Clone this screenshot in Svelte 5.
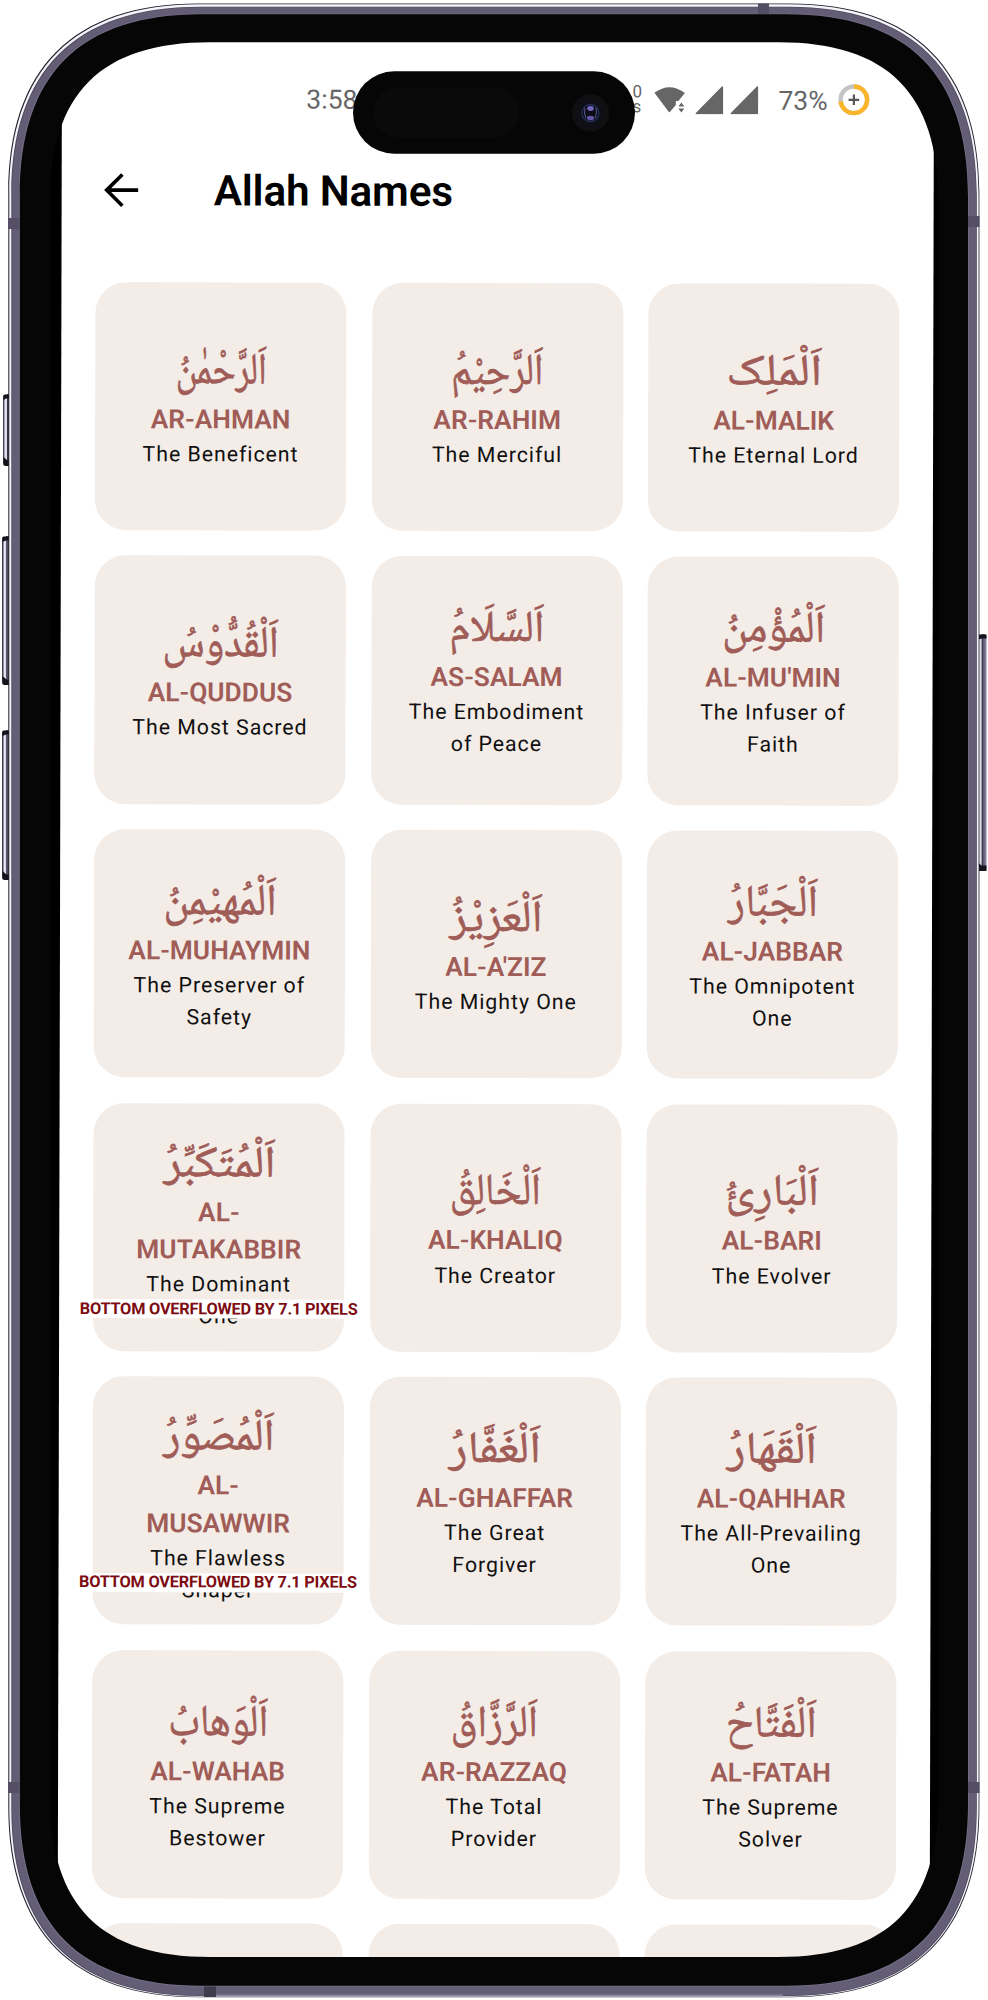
<script>
  const names = [
    { ar: 'اَلرَّحْمٰنُ', w: 91, name: 'AR-AHMAN', desc: 'The Beneficent' },
    { ar: 'اَلرَّحِيْمُ', w: 92, name: 'AR-RAHIM', desc: 'The Merciful' },
    { ar: 'اَلْمَلِک', w: 96, name: 'AL-MALIK', desc: 'The Eternal Lord' },
    { ar: 'اَلْقُدُّوْسُ', w: 116, name: 'AL-QUDDUS', desc: 'The Most Sacred' },
    { ar: 'اَلسَّلَامُ', w: 95, name: 'AS-SALAM', desc: 'The Embodiment\nof Peace' },
    { ar: 'اَلْمُؤْمِنُ', w: 103, name: "AL-MU'MIN", desc: 'The Infuser of\nFaith' },
    { ar: 'اَلْمُهيْمِنُ', w: 113, name: 'AL-MUHAYMIN', desc: 'The Preserver of\nSafety' },
    { ar: 'اَلْعَزِيْزُ', w: 93, name: "AL-A'ZIZ", desc: 'The Mighty One' },
    { ar: 'اَلْجَبَّارُ', w: 90, name: 'AL-JABBAR', desc: 'The Omnipotent\nOne' },
    { ar: 'اَلْمُتَكَبِّرُ', w: 112, name: 'AL-\nMUTAKABBIR', desc: 'The Dominant\nOne', over: true },
    { ar: 'اَلْخَالِقُ', w: 91, name: 'AL-KHALIQ', desc: 'The Creator' },
    { ar: 'اَلْبَارِئُ', w: 93, name: 'AL-BARI', desc: 'The Evolver' },
    { ar: 'اَلْمُصَوِّرُ', w: 111, name: 'AL-\nMUSAWWIR', desc: 'The Flawless\nShaper', over: true },
    { ar: 'اَلْغَفَّارُ', w: 92, name: 'AL-GHAFFAR', desc: 'The Great\nForgiver' },
    { ar: 'اَلْقَهَارُ', w: 90, name: 'AL-QAHHAR', desc: 'The All-Prevailing\nOne' },
    { ar: 'اَلْوَهابُ', w: 100, name: 'AL-WAHAB', desc: 'The Supreme\nBestower' },
    { ar: 'اَلرَّزَّاقُ', w: 87, name: 'AR-RAZZAQ', desc: 'The Total\nProvider' },
    { ar: 'اَلْفَتَّاحُ', w: 91, name: 'AL-FATAH', desc: 'The Supreme\nSolver' },
    null,
    null,
    null
  ];

  // Rounded box with continuous corners: r is the corner reach, k the control offset.
  function box(x1, y1, x2, y2, r, k) {
    return `M${x1} ${y1 + r}C${x1} ${y1 + k} ${x1 + k} ${y1} ${x1 + r} ${y1}H${x2 - r}C${x2 - k} ${y1} ${x2} ${y1 + k} ${x2} ${y1 + r}V${y2 - r}C${x2} ${y2 - k} ${x2 - k} ${y2} ${x2 - r} ${y2}H${x1 + r}C${x1 + k} ${y2} ${x1} ${y2 - k} ${x1} ${y2 - r}Z`;
  }
  const hole = box(50, 42.3, 938.5, 1957, 160, 51);
  const rim = box(27, 21, 961, 1979, 178, 58);
  const outer = box(8.3, 3.5, 979.4, 1997.3, 190, 65);
  const light = box(9.3, 4.3, 978.6, 1996.8, 190, 65);
  const metal = box(11.3, 6.8, 976.8, 1996, 188, 64);
  const glass = box(19.8, 14.3, 968, 1985.8, 182, 60);
  const buttons = [
    { x: 3, y: 394, w: 8, h: 72 },
    { x: 2, y: 536, w: 9, h: 149 },
    { x: 2, y: 730, w: 9, h: 150 },
    { x: 977, y: 634, w: 9.5, h: 237 }
  ];
</script>

<main class="phone">
  <div class="screen">
    <div class="status">
      <span class="time">3:58</span>
      <div class="right">
        <span class="net"><i>0</i><i>s</i></span>
        <svg class="wifi" width="32" height="27" viewBox="0 0 32 27">
          <path d="M0.500 6.500Q15.500 -5 31 6.500L24.500 14.500H22V18.500L16 25.500Q15.500 26 15 25.500Z" fill="#666" />
          <path d="M24.500 20L27.500 16L30.500 20ZM24.500 22L27.500 26L30.500 22Z" fill="#666" />
        </svg>
        <svg class="sig" width="29" height="29" viewBox="0 0 29 29"><path d="M1.500 28H27.500V1.500Z" fill="#666" stroke="#666" stroke-width="1.500" stroke-linejoin="round" /></svg>
        <svg class="sig two" width="29" height="29" viewBox="0 0 29 29"><path d="M1.500 28H27.500V1.500Z" fill="#666" stroke="#666" stroke-width="1.500" stroke-linejoin="round" /></svg>
        <span class="pct">73%</span>
        <svg width="32" height="32" viewBox="0 0 32 32">
          <circle cx="16" cy="16" r="13.300" fill="none" stroke="#c4c4c4" stroke-width="4.400" />
          <path d="M16 2.700A13.300 13.300 0 1 1 2.800 17.600" fill="none" stroke="#fbb52d" stroke-width="4.400" />
          <path d="M16 10.700V21.300M10.700 16H21.300" stroke="#555" stroke-width="2.200" />
        </svg>
      </div>
    </div>

    <header>
      <svg width="36" height="36" viewBox="0 0 36 36" fill="none" stroke="#000" stroke-width="3.600">
        <path d="M18.700 2.300L3 18L18.700 33.700M3 18H34.500" />
      </svg>
      <h1>Allah Names</h1>
    </header>

    <div class="grid">
      {#each names as n}
        <article class:tall={n?.over}>
          {#if n}
            <svg class="arabic" width="140" height="57" viewBox="0 0 140 57">
              <text x="70" y="39" text-anchor="middle" textLength={n.w} lengthAdjust="spacingAndGlyphs" lang="ar">{n.ar}</text>
            </svg>
            <h2>{n.name}</h2>
            <p>{n.desc}</p>
            {#if n.over}<div class="over"><span>BOTTOM OVERFLOWED BY 7.1 PIXELS</span></div>{/if}
          {/if}
        </article>
      {/each}
    </div>
  </div>

  <svg class="frame" width="988" height="2000" viewBox="0 0 988 2000">
    <defs>
      <linearGradient id="btn">
        <stop offset="0" stop-color="#1a1923" />
        <stop offset=".14" stop-color="#77738a" />
        <stop offset=".25" stop-color="#e9e8f4" />
        <stop offset=".45" stop-color="#d8d7e8" />
        <stop offset=".52" stop-color="#25232f" />
        <stop offset=".62" stop-color="#55506a" />
        <stop offset="1" stop-color="#8d89a2" />
      </linearGradient>
      <radialGradient id="cam">
        <stop offset="0" stop-color="#17172b" />
        <stop offset=".45" stop-color="#0e0f18" />
        <stop offset="1" stop-color="#101011" />
      </radialGradient>
    </defs>
    {#each buttons as b}
      <rect x={b.x} y={b.y} width={b.w} height={b.h} rx="3" fill="url(#btn)" />
      <path d="M{b.x + 0.5} {b.y + 6}V{b.y + 2}q0 -1.500 2 -1.500H{b.x + b.w}v4h-5zM{b.x + 0.5} {b.y + b.h - 9}l4 3.500h{b.w - 4.5}v5.500H{b.x + 2.5}q-2 0 -2 -3z" fill="#15141c" />
    {/each}
    <g fill-rule="evenodd">
      <path d={outer + rim} fill="#24222e" />
      <path d={light + rim} fill="#f4f3f9" />
      <path d={metal + rim} fill="#4c475c" />
      <path d={box(12.1, 7.3, 976.2, 1995.5, 188, 64) + rim} fill="#635d75" />
      <path d={box(19, 13.8, 968.7, 1986.5, 182, 60) + rim} fill="#77728b" />
      <path d={glass + hole} fill="#060606" />
    </g>
    <path d="M205 1995.500H783" stroke="#8985a0" stroke-width="2.200" />
    <g fill="#544f65">
      <rect x="8" y="218" width="11.500" height="11" />
      <rect x="8" y="1782" width="11.500" height="11" />
      <rect x="968" y="216" width="11.500" height="11" />
      <rect x="968" y="1782" width="11.500" height="11" />
      <rect x="758" y="3.500" width="11" height="10.500" />
      <rect x="204" y="1986.500" width="12" height="10.500" fill="#403c4e" />
    </g>
    <rect x="353" y="71.300" width="282" height="82.400" rx="41.200" fill="#060606" />
    <rect x="373" y="87.500" width="146" height="50" rx="25" fill="#0a0a0a" />
    <circle cx="590.500" cy="113" r="18.500" fill="url(#cam)" />
    <circle cx="590.500" cy="113" r="8.500" fill="#0b0b16" stroke="#263056" stroke-width="1.300" />
    <ellipse cx="590.500" cy="108.500" rx="3.300" ry="2.400" fill="#7466bd" />
    <ellipse cx="590.500" cy="118" rx="3.600" ry="2.200" fill="#6257a5" />
    <path d="M585 108Q583.500 113 586 118M596 108Q597.500 113 595 118" fill="none" stroke="#5d5e91" stroke-width="1" />
  </svg>
</main>

<style>
  :global(body) {
    margin: 0;
    background: #fff;
  }
  .phone {
    position: relative;
    box-sizing: border-box;
    width: 988px;
    height: 2000px;
    padding: 42px 54.700px 43px 61.500px;
    overflow: hidden;
    font-family: Roboto, sans-serif;
    background: linear-gradient(#000, #000) 45px 115px / 898px 1770px no-repeat;
  }
  .screen {
    height: 1918px;
    overflow: hidden;
    background: #fff;
    transform: rotate(0.130deg);
    transform-origin: 0 0;
  }
  .frame {
    position: absolute;
    inset: 0;
  }
  .status {
    display: flex;
    justify-content: space-between;
    align-items: center;
    height: 32px;
    padding: 40px 64px 0 244.500px;
    font-size: 26.500px;
    color: #666;
  }
  .right {
    display: flex;
    align-items: center;
  }
  .net {
    display: flex;
    flex-direction: column;
    width: 10px;
    margin-right: 11px;
    font-size: 17px;
    line-height: 15px;
  }
  .net i {
    font-style: normal;
  }
  .sig {
    margin-left: 9px;
  }
  .sig.two {
    margin-left: 6px;
  }
  .pct {
    margin: 1px 10px 0 20px;
  }
  header {
    display: flex;
    align-items: center;
    height: 60px;
    padding: 46px 0 0 42px;
  }
  h1 {
    margin: 1px 0 0 74px;
    font-size: 42.300px;
    font-weight: 600;
    letter-spacing: -0.150px;
    line-height: 60px;
    color: #000;
  }
  .grid {
    display: grid;
    grid-template-columns: repeat(3, 251px);
    grid-auto-rows: 248.300px;
    gap: 25.300px 25.500px;
    padding: 61.800px 0 0 34px;
  }
  article {
    position: relative;
    display: flex;
    flex-direction: column;
    align-items: center;
    justify-content: safe center;
    box-sizing: border-box;
    padding: 35.500px 0 34px;
    border-radius: 31px;
    background: #f3ece7;
    text-align: center;
    white-space: pre-line;
  }
  .tall {
    padding-top: 34.300px;
  }
  .arabic {
    flex: none;
    overflow: visible;
  }
  .arabic text {
    font-family: 'Noto Naskh Arabic', 'Scheherazade New', Amiri, 'DejaVu Sans', serif;
    font-size: 44px;
    fill: #a05c57;
    stroke: #a05c57;
    stroke-width: 0.700px;
  }
  h2 {
    flex: none;
    margin: 0;
    font-size: 26.300px;
    font-weight: 600;
    letter-spacing: 0.030px;
    line-height: 37.300px;
    color: #a05c57;
  }
  p {
    flex: none;
    margin: 0;
    font-size: 21.300px;
    letter-spacing: 0.970px;
    line-height: 32px;
    color: #111;
  }
  .over {
    position: absolute;
    top: 196.500px;
    left: -14px;
    width: 279px;
    height: 19px;
    background: #fff;
    display: flex;
    align-items: center;
    justify-content: center;
    white-space: nowrap;
  }
  .over span {
    font-size: 16.300px;
    font-weight: 700;
    letter-spacing: -0.190px;
    line-height: 18px;
    color: #7d0c12;
  }
</style>
